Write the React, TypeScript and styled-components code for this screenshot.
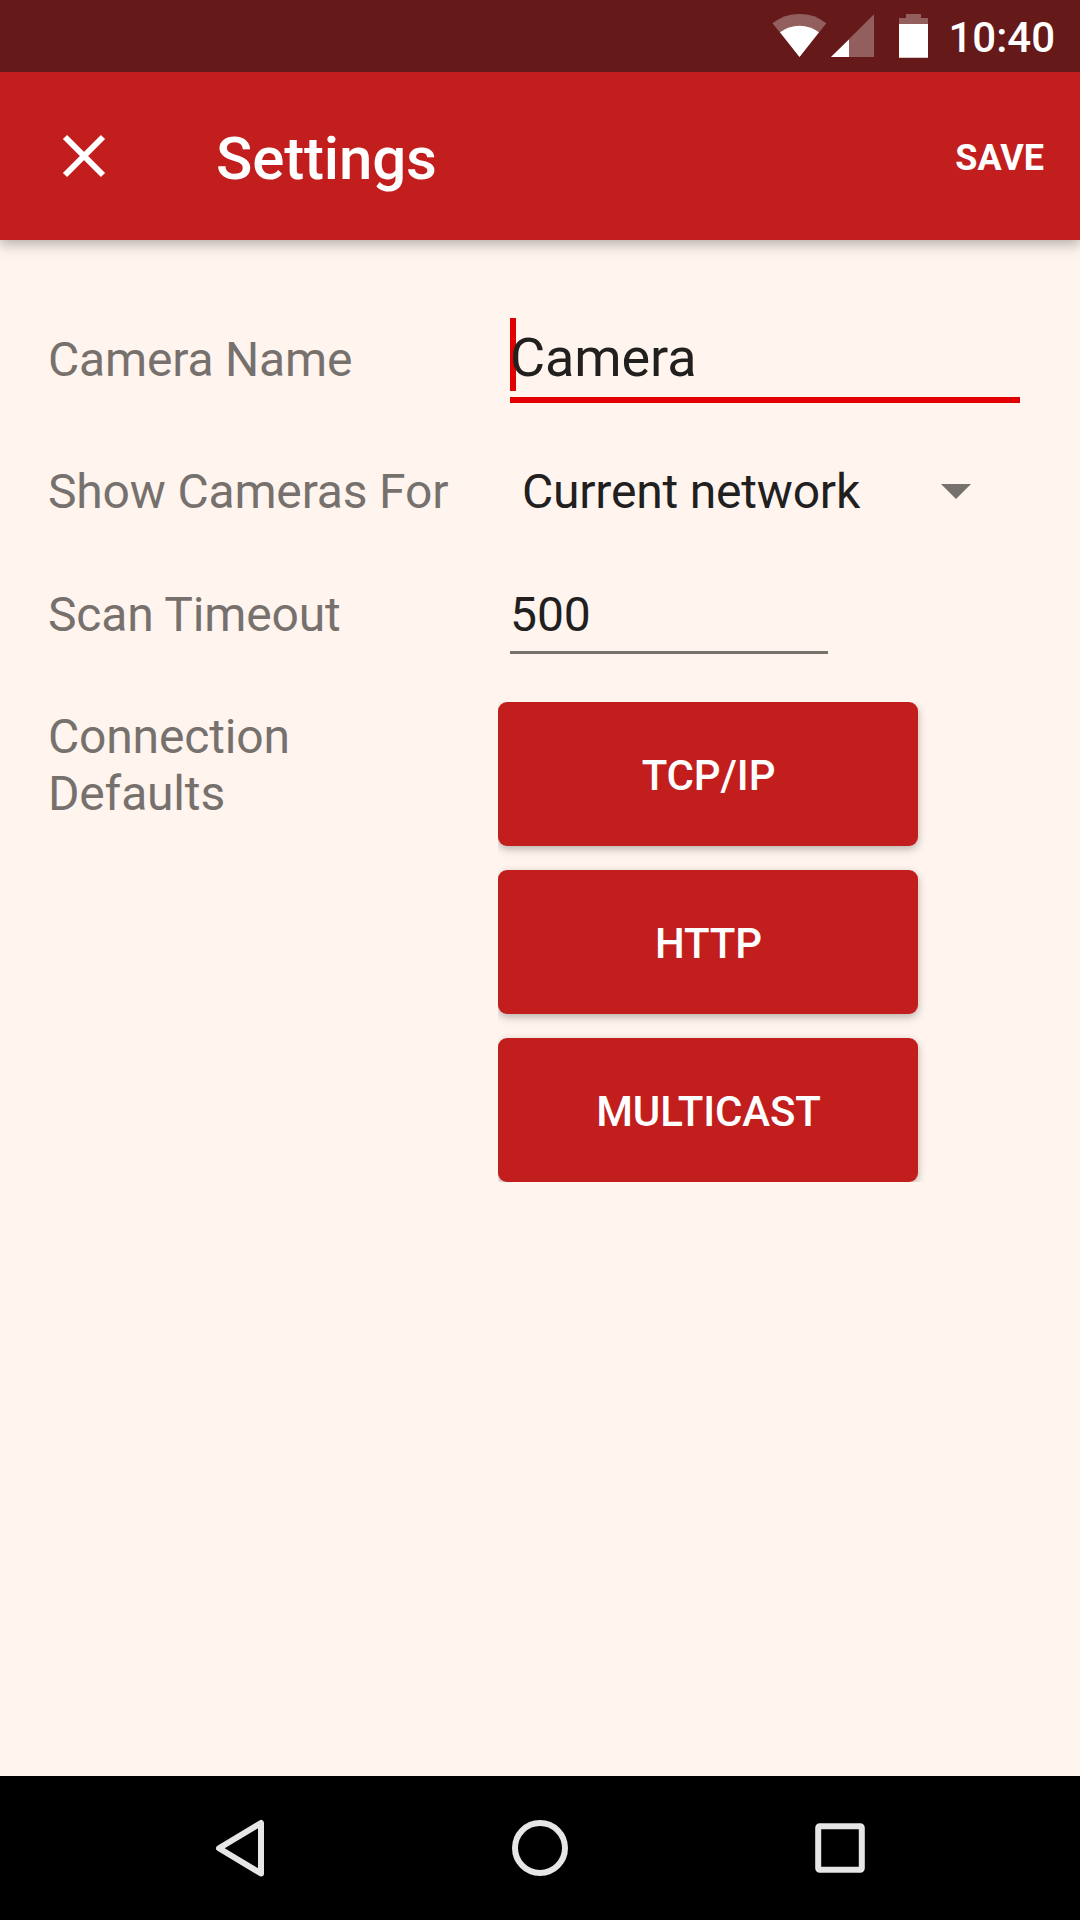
import React from "react";
import styled, { createGlobalStyle } from "styled-components";

const GlobalStyle = createGlobalStyle`
  html, body { margin: 0; padding: 0; background: #fff4ee; }
  * { box-sizing: border-box; }
`;

const Screen = styled.div`
  display: flex;
  flex-direction: column;
  width: 1080px;
  height: 1920px;
  overflow: hidden;
  background: #fff4ee;
  font-family: Roboto, "Noto Sans", sans-serif;
`;

const StatusBar = styled.div`
  display: flex;
  align-items: flex-start;
  justify-content: flex-end;
  height: 72px;
  padding-right: 25px;
  background: #651919;
`;

const StatusIcons = styled.svg`
  display: block;
  margin-right: 18px;
`;

const Clock = styled.span`
  margin-top: 13px;
  color: #fff;
  font-size: 42px;
  font-weight: 500;
  line-height: 50px;
`;

const AppBar = styled.header`
  display: flex;
  align-items: center;
  height: 168px;
  padding: 0 36px 0 48px;
  background: #c21e1d;
  color: #fff;
  box-shadow: 0 3px 13px 1px rgba(0, 0, 0, 0.3);
  clip-path: inset(0 0 -30px 0);
  z-index: 1;
`;

const CloseButton = styled.button`
  display: flex;
  width: 72px;
  height: 72px;
  margin-right: 96px;
  padding: 0;
  border: 0;
  background: none;
`;

const Title = styled.h1`
  flex: 1;
  margin: 6px 0 0;
  font-size: 60px;
  font-weight: 500;
  letter-spacing: -0.15px;
  line-height: 72px;
`;

const SaveButton = styled.button`
  padding: 4px 0 0;
  border: 0;
  background: none;
  color: #fff;
  font: 700 36px/44px Roboto, "Noto Sans", sans-serif;
`;

const Form = styled.main`
  display: flex;
  flex: 1;
  flex-direction: column;
  padding: 60px 48px 0;
`;

const Row = styled.div<{ $height: number }>`
  display: grid;
  grid-template-columns: 450px 1fr;
  align-items: start;
  height: ${(p) => p.$height}px;
`;

const Label = styled.div<{ $top: number }>`
  width: 420px;
  padding-top: ${(p) => p.$top}px;
  color: #77716e;
  font-size: 48px;
  letter-spacing: -0.17px;
  line-height: 57px;
`;

const Field = styled.div<{ $top: number; $width: number; $size: number; $focused?: boolean }>`
  position: relative;
  width: ${(p) => p.$width}px;
  height: ${(p) => (p.$focused ? 85 : 68)}px;
  margin: ${(p) => p.$top}px 0 0 12px;
  padding-top: ${(p) => (p.$focused ? 8 : 0)}px;
  border-bottom: ${(p) => (p.$focused ? "6px solid #e00000" : "3px solid #77716e")};
  color: #21201f;
  font-size: ${(p) => p.$size}px;
  letter-spacing: -0.1px;
  line-height: ${(p) => (p.$focused ? 63 : 57)}px;
`;

const Caret = styled.i`
  position: absolute;
  top: 0;
  left: 0;
  width: 6px;
  height: 73px;
  background: #e00000;
`;

const Value = styled.span`
  position: relative;
`;

const Spinner = styled.div`
  display: flex;
  align-items: center;
  justify-content: space-between;
  width: 473px;
  height: 143px;
  padding-left: 24px;
  color: #21201f;
  font-size: 48px;
  letter-spacing: -0.2px;
  line-height: 57px;
`;

const ButtonStack = styled.div`
  display: flex;
  flex-direction: column;
  gap: 24px;
  margin-top: 12px;
  overflow: hidden;
`;

const ProtocolButton = styled.button`
  width: 420px;
  height: 144px;
  padding: 4px 0 0 1px;
  border: 0;
  border-radius: 9px;
  background: #c21e1d;
  color: #fff;
  font: 500 42px/50px Roboto, "Noto Sans", sans-serif;
  letter-spacing: -0.1px;
  box-shadow: 0 3px 9px rgba(0, 0, 0, 0.28);
`;

const NavBar = styled.nav`
  display: grid;
  grid-template-columns: repeat(3, 300px);
  justify-content: center;
  height: 144px;
  background: #000;
`;

const NavIcon = styled.svg`
  display: block;
  margin: 0 auto;
  fill: none;
  stroke: #e6e6e6;
  stroke-width: 6;
  stroke-linejoin: round;
`;

export default function App() {
  return (
    <Screen>
      <GlobalStyle />
      <StatusBar>
        <StatusIcons width="160" height="72" viewBox="770 0 160 72" fill="#fff">
          <path d="M799.5 57L772.5 23.3Q784 14 799.5 14T826.3 23.3Z" opacity="0.3" />
          <path d="M799.5 57L780 32.2Q788.5 25.7 799.5 25.7T819 32.2Z" />
          <path d="M874 14.3V57H831Z" opacity="0.3" />
          <path d="M849 39.5V57H831Z" />
          <path d="M899 24V18H906V14H921V18H928V24Z" opacity="0.3" />
          <path d="M899 24H928V57.7H899Z" />
        </StatusIcons>
        <Clock>10:40</Clock>
      </StatusBar>
      <AppBar>
        <CloseButton aria-label="Close">
          <svg width="72" height="72" viewBox="48 120 72 72">
            <path d="M65 137L103 175M103 137L65 175" stroke="#fff" strokeWidth="6" />
          </svg>
        </CloseButton>
        <Title>Settings</Title>
        <SaveButton>SAVE</SaveButton>
      </AppBar>
      <Form>
        <Row $height={120}>
          <Label $top={31}>Camera Name</Label>
          <Field $top={18} $width={510} $size={54} $focused>
            <Caret />
            <Value>Camera</Value>
          </Field>
        </Row>
        <Row $height={144}>
          <Label $top={43}>Show Cameras For</Label>
          <Spinner>
            Current network
            <svg width="30" height="16" viewBox="0 0 30 16">
              <path d="M0 0H30L15 15Z" fill="#77716e" />
            </svg>
          </Spinner>
        </Row>
        <Row $height={126}>
          <Label $top={22}>Scan Timeout</Label>
          <Field $top={22} $width={318} $size={48}>
            <Value>500</Value>
          </Field>
        </Row>
        <Row $height={492}>
          <Label $top={18}>
            Connection
            <br />
            Defaults
          </Label>
          <ButtonStack>
            <ProtocolButton>TCP/IP</ProtocolButton>
            <ProtocolButton>HTTP</ProtocolButton>
            <ProtocolButton>MULTICAST</ProtocolButton>
          </ButtonStack>
        </Row>
      </Form>
      <NavBar>
        <NavIcon width="72" height="144" viewBox="204 0 72 144">
          <path d="M219 72.2L261 47V97.5Z" />
        </NavIcon>
        <NavIcon width="72" height="144" viewBox="504 0 72 144">
          <circle cx="540" cy="72" r="25" />
        </NavIcon>
        <NavIcon width="72" height="144" viewBox="804 0 72 144">
          <rect x="818.2" y="50.2" width="43.6" height="43.6" rx="1.5" />
        </NavIcon>
      </NavBar>
    </Screen>
  );
}
